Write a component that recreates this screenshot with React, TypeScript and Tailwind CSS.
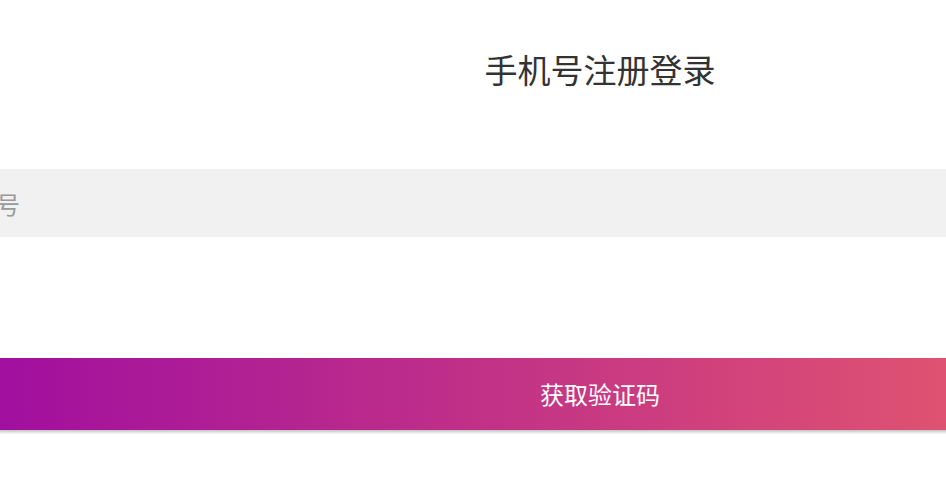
import React from "react";

const font = { fontFamily: '"Noto Sans CJK SC", "Noto Sans", sans-serif' };

export default function App() {
  return (
    <div className="h-[480px] w-[946px] overflow-hidden bg-white" style={font}>
      <div className="-ml-[200px] flex w-[1600px] flex-col items-center">
        <h1 className="mt-[45px] text-[33px] leading-[49px] font-normal text-[#333333]">手机号注册登录</h1>

        <input
          type="tel"
          placeholder="请输入手机号"
          className="mt-[75px] h-[68px] w-full bg-[#f1f1f1] pl-[76px] text-[24px] text-[#333] outline-none placeholder:text-[#999999]"
        />

        <button
          type="button"
          className="mt-[121px] h-[72px] w-full bg-[linear-gradient(90deg,#a10f9f_12.5%,#df5271_71.6%)] text-[24px] text-white shadow-[0_2px_3px_rgba(0,0,0,0.25)]"
        >
          获取验证码
        </button>
      </div>
    </div>
  );
}
